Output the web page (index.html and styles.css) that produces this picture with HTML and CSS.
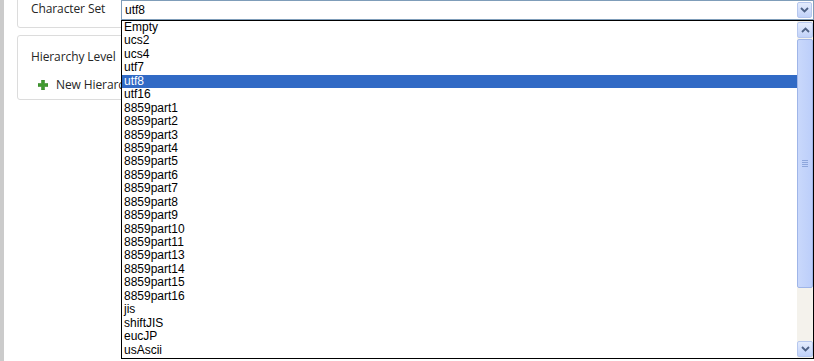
FILE: index.html
```html
<!DOCTYPE html>
<html>
<head>
<meta charset="utf-8">
<link rel="stylesheet" href="styles.css">
</head>
<body>
<div class="page">
  <div class="strip"></div>
  <div class="content">
    <div class="card card-top">
      <div class="field-row">
        <span class="label">Character Set</span>
        <div class="combo">
          <span class="combo-value">utf8</span>
          <span class="combo-btn">
            <svg width="9" height="6" viewBox="0 0 9 6"><path d="M1 1 L4.5 4.5 L8 1" fill="none" stroke="#4d6185" stroke-width="1.8"/></svg>
          </span>
        </div>
      </div>
    </div>
    <div class="card card-hier">
      <div class="label hier-label">Hierarchy Level</div>
      <div class="new-row">
        <svg class="plus" width="10" height="10" viewBox="0 0 10 10"><path d="M3.5 0h3v3.5h3.5v3h-3.5v3.5h-3v-3.5h-3.5v-3h3.5z" fill="#3f9a2e" stroke="#2d7a20" stroke-width="0.5"/></svg>
        <span class="new-text">New Hierarchy Level</span>
      </div>
    </div>
  </div>
  <div class="dropdown">
    <ul class="options">
      <li>Empty</li>
      <li>ucs2</li>
      <li>ucs4</li>
      <li>utf7</li>
      <li class="selected">utf8</li>
      <li>utf16</li>
      <li>8859part1</li>
      <li>8859part2</li>
      <li>8859part3</li>
      <li>8859part4</li>
      <li>8859part5</li>
      <li>8859part6</li>
      <li>8859part7</li>
      <li>8859part8</li>
      <li>8859part9</li>
      <li>8859part10</li>
      <li>8859part11</li>
      <li>8859part13</li>
      <li>8859part14</li>
      <li>8859part15</li>
      <li>8859part16</li>
      <li>jis</li>
      <li>shiftJIS</li>
      <li>eucJP</li>
      <li>usAscii</li>
    </ul>
    <div class="scrollbar">
      <div class="sb-btn">
        <svg width="9" height="6" viewBox="0 0 9 6"><path d="M1 5 L4.5 1.5 L8 5" fill="none" stroke="#4d6185" stroke-width="1.8"/></svg>
      </div>
      <div class="sb-track">
        <div class="sb-thumb">
          <span class="grip"></span><span class="grip"></span><span class="grip"></span><span class="grip"></span>
        </div>
      </div>
      <div class="sb-btn">
        <svg width="9" height="6" viewBox="0 0 9 6"><path d="M1 1 L4.5 4.5 L8 1" fill="none" stroke="#4d6185" stroke-width="1.8"/></svg>
      </div>
    </div>
  </div>
</div>
</body>
</html>
```

FILE: styles.css
```css
html, body {
  margin: 0;
  padding: 0;
  background: #ffffff;
}
body {
  width: 814px;
  height: 361px;
  overflow: hidden;
  font-family: "Open Sans", "Noto Sans", sans-serif;
}
.page {
  position: relative;
  display: flex;
  height: 361px;
}
.strip {
  width: 4px;
  background: #cbcbcb;
  flex: none;
}
.content {
  flex: 1;
  min-width: 0;
  padding-left: 13px;
  display: flex;
  flex-direction: column;
  gap: 7px;
}
.card {
  border: 1px solid #dcdcdc;
  border-radius: 3px;
  background: #ffffff;
  margin-right: 10px;
}
.card-top {
  margin-top: -12px;
  height: 40px;
  box-sizing: border-box;
  padding: 12px 0 0 13px;
}
.field-row {
  display: flex;
  align-items: flex-start;
}
.label {
  font-size: 12px;
  color: #262626;
  letter-spacing: -0.1px;
}
.field-row .label {
  width: 90px;
  flex: none;
  line-height: 16px;
}
.combo {
  flex: none;
  width: 693px;
  height: 20px;
  box-sizing: border-box;
  border: 1px solid #7f9db9;
  margin-top: -1px;
  display: flex;
  align-items: center;
  background: #fff;
}
.combo-value {
  font-family: "Liberation Sans", Arial, sans-serif;
  font-size: 12px;
  padding-left: 3px;
  flex: 1;
  color: #000;
}
.combo-btn {
  width: 15px;
  height: 16px;
  margin-right: 1px;
  border: 1px solid #b6c7ee;
  box-sizing: border-box;
  border-radius: 2px;
  background: linear-gradient(#e4ecfd, #c1d2f9);
  display: flex;
  align-items: center;
  justify-content: center;
}
.card-hier {
  height: 65px;
  box-sizing: border-box;
  padding: 13px 0 0 13px;
}
.hier-label {
  line-height: 16px;
}
.new-row {
  display: flex;
  align-items: center;
  margin-top: 11px;
  padding-left: 7px;
  gap: 8px;
}
.new-text {
  font-size: 12px;
  color: #262626;
  letter-spacing: -0.1px;
}
.dropdown {
  position: absolute;
  left: 121px;
  top: 20px;
  width: 693px;
  height: 339px;
  box-sizing: border-box;
  border: 1px solid #000;
  background: #fff;
  display: flex;
}
.options {
  list-style: none;
  margin: 0;
  padding: 0;
  flex: 1;
  font-family: "Liberation Sans", Arial, sans-serif;
  font-size: 12px;
  color: #000;
}
.options li {
  height: 13.44px;
  line-height: 13.44px;
  padding-left: 2px;
  white-space: nowrap;
}
.options li.selected {
  background: #316ac5;
  color: #fff;
}
.scrollbar {
  width: 16px;
  display: flex;
  flex-direction: column;
  background: #f4f2ec;
}
.sb-btn {
  height: 16px;
  margin: 1px 0;
  border: 1px solid #b6c7ee;
  box-sizing: border-box;
  border-radius: 2px;
  background: linear-gradient(#e4ecfd, #c1d2f9);
  display: flex;
  align-items: center;
  justify-content: center;
  flex: none;
}
.sb-track {
  flex: 1;
  display: flex;
  flex-direction: column;
  padding-bottom: 52px;
}
.sb-thumb {
  flex: 1;
  border: 1px solid #9fb5e8;
  border-radius: 2px;
  background: linear-gradient(90deg, #c9d8fb, #bccefa);
  display: flex;
  flex-direction: column;
  align-items: center;
  justify-content: center;
  gap: 1px;
}
.grip {
  width: 6px;
  height: 1px;
  background: #8ea6dc;
}
```
